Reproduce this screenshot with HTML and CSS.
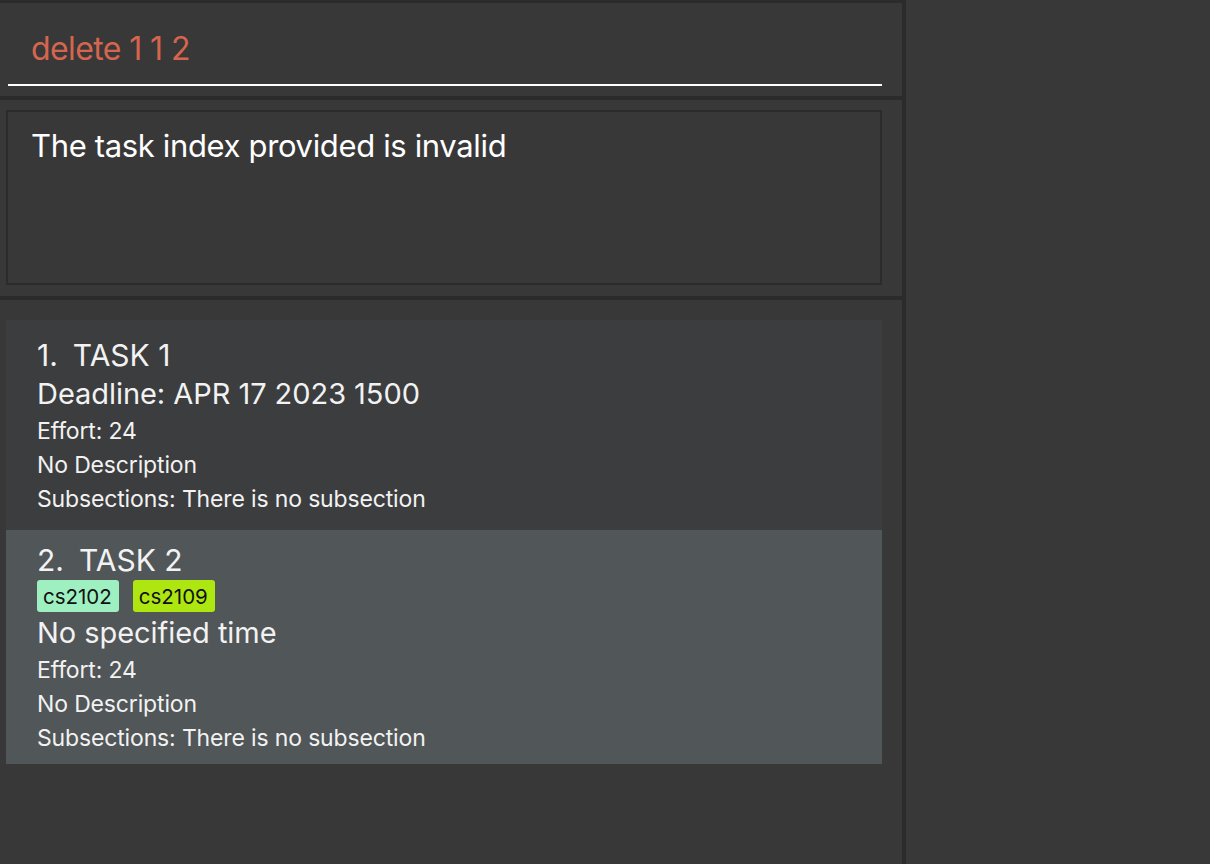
FILE: index.html
```html
<!DOCTYPE html>
<html>
<head>
<meta charset="utf-8">
<link rel="stylesheet" href="styles.css">
</head>
<body>
<div class="app">
  <div class="main">
    <div class="topline"></div>
    <div class="command-panel">
      <div class="command-box">delete 1 1 2</div>
    </div>
    <div class="sep"></div>
    <div class="result-panel">
      <div class="result-box">The task index provided is invalid</div>
    </div>
    <div class="sep"></div>
    <div class="list-panel">
      <div class="card card-odd">
        <div class="title"><span class="idx">1.</span>TASK 1</div>
        <div class="deadline">Deadline: APR 17 2023 1500</div>
        <div class="small">Effort: 24</div>
        <div class="small">No Description</div>
        <div class="small">Subsections: There is no subsection</div>
      </div>
      <div class="card card-even">
        <div class="title"><span class="idx">2.</span>TASK 2</div>
        <div class="tags">
          <span class="tag tag-a">cs2102</span>
          <span class="tag tag-b">cs2109</span>
        </div>
        <div class="deadline">No specified time</div>
        <div class="small">Effort: 24</div>
        <div class="small">No Description</div>
        <div class="small">Subsections: There is no subsection</div>
      </div>
    </div>
  </div>
  <div class="divider"></div>
  <div class="side"></div>
</div>
</body>
</html>
```
FILE: styles.css
```css
html, body {
  margin: 0;
  padding: 0;
  background: #383838;
  font-family: Inter, "Noto Sans", sans-serif;
  color: #f2f2f2;
}
.app {
  display: flex;
  width: 1210px;
  height: 864px;
  overflow: hidden;
}
.main {
  width: 902px;
  display: flex;
  flex-direction: column;
}
.topline {
  height: 3px;
  background: #2b2b2b;
}
.command-panel {
  height: 93px;
  padding-left: 8px;
  padding-right: 20px;
  box-sizing: border-box;
}
.command-box {
  height: 83px;
  border-bottom: 2px solid #ffffff;
  box-sizing: border-box;
  padding-left: 23px;
  padding-top: 28px;
  font-size: 32px;
  line-height: 36px;
  color: #d5654e;
  letter-spacing: -0.6px;
}
.sep {
  height: 4px;
  background: #2b2b2b;
}
.result-panel {
  height: 196px;
  padding: 10px 20px 0 6px;
  box-sizing: border-box;
}
.result-box {
  height: 175px;
  border: 2px solid #2b2b2b;
  box-sizing: border-box;
  padding: 15px 0 0 23px;
  font-size: 31px;
  line-height: 38px;
  color: #ffffff;
  letter-spacing: -0.35px;
}
.list-panel {
  flex: 1;
  padding: 20px 20px 0 6px;
}
.card {
  padding-left: 31px;
  box-sizing: border-box;
}
.card-odd {
  background: #3c3d3f;
  height: 210px;
  padding-top: 17px;
}
.card-even {
  background: #515658;
  height: 234px;
  padding-top: 12px;
}
.title {
  font-size: 30px;
  line-height: 36px;
  letter-spacing: 0;
}
.idx {
  margin-right: 15px;
}
.deadline {
  font-size: 29px;
  line-height: 41px;
  letter-spacing: -0.05px;
}
.small {
  font-size: 23px;
  line-height: 34px;
  letter-spacing: -0.15px;
}
.tags {
  display: flex;
  gap: 14px;
  height: 32px;
  margin-top: 2px;
}
.tag {
  display: inline-flex;
  align-items: center;
  height: 32px;
  padding: 0 7px 0 6px;
  border-radius: 3px;
  font-size: 20.5px;
  color: #111111;
  box-sizing: border-box;
}
.tag-a { background: #9ef0c0; }
.tag-b { background: #aee612; }
.divider {
  width: 4px;
  background: #2b2b2b;
}
.side {
  flex: 1;
  background: #383838;
}
```
